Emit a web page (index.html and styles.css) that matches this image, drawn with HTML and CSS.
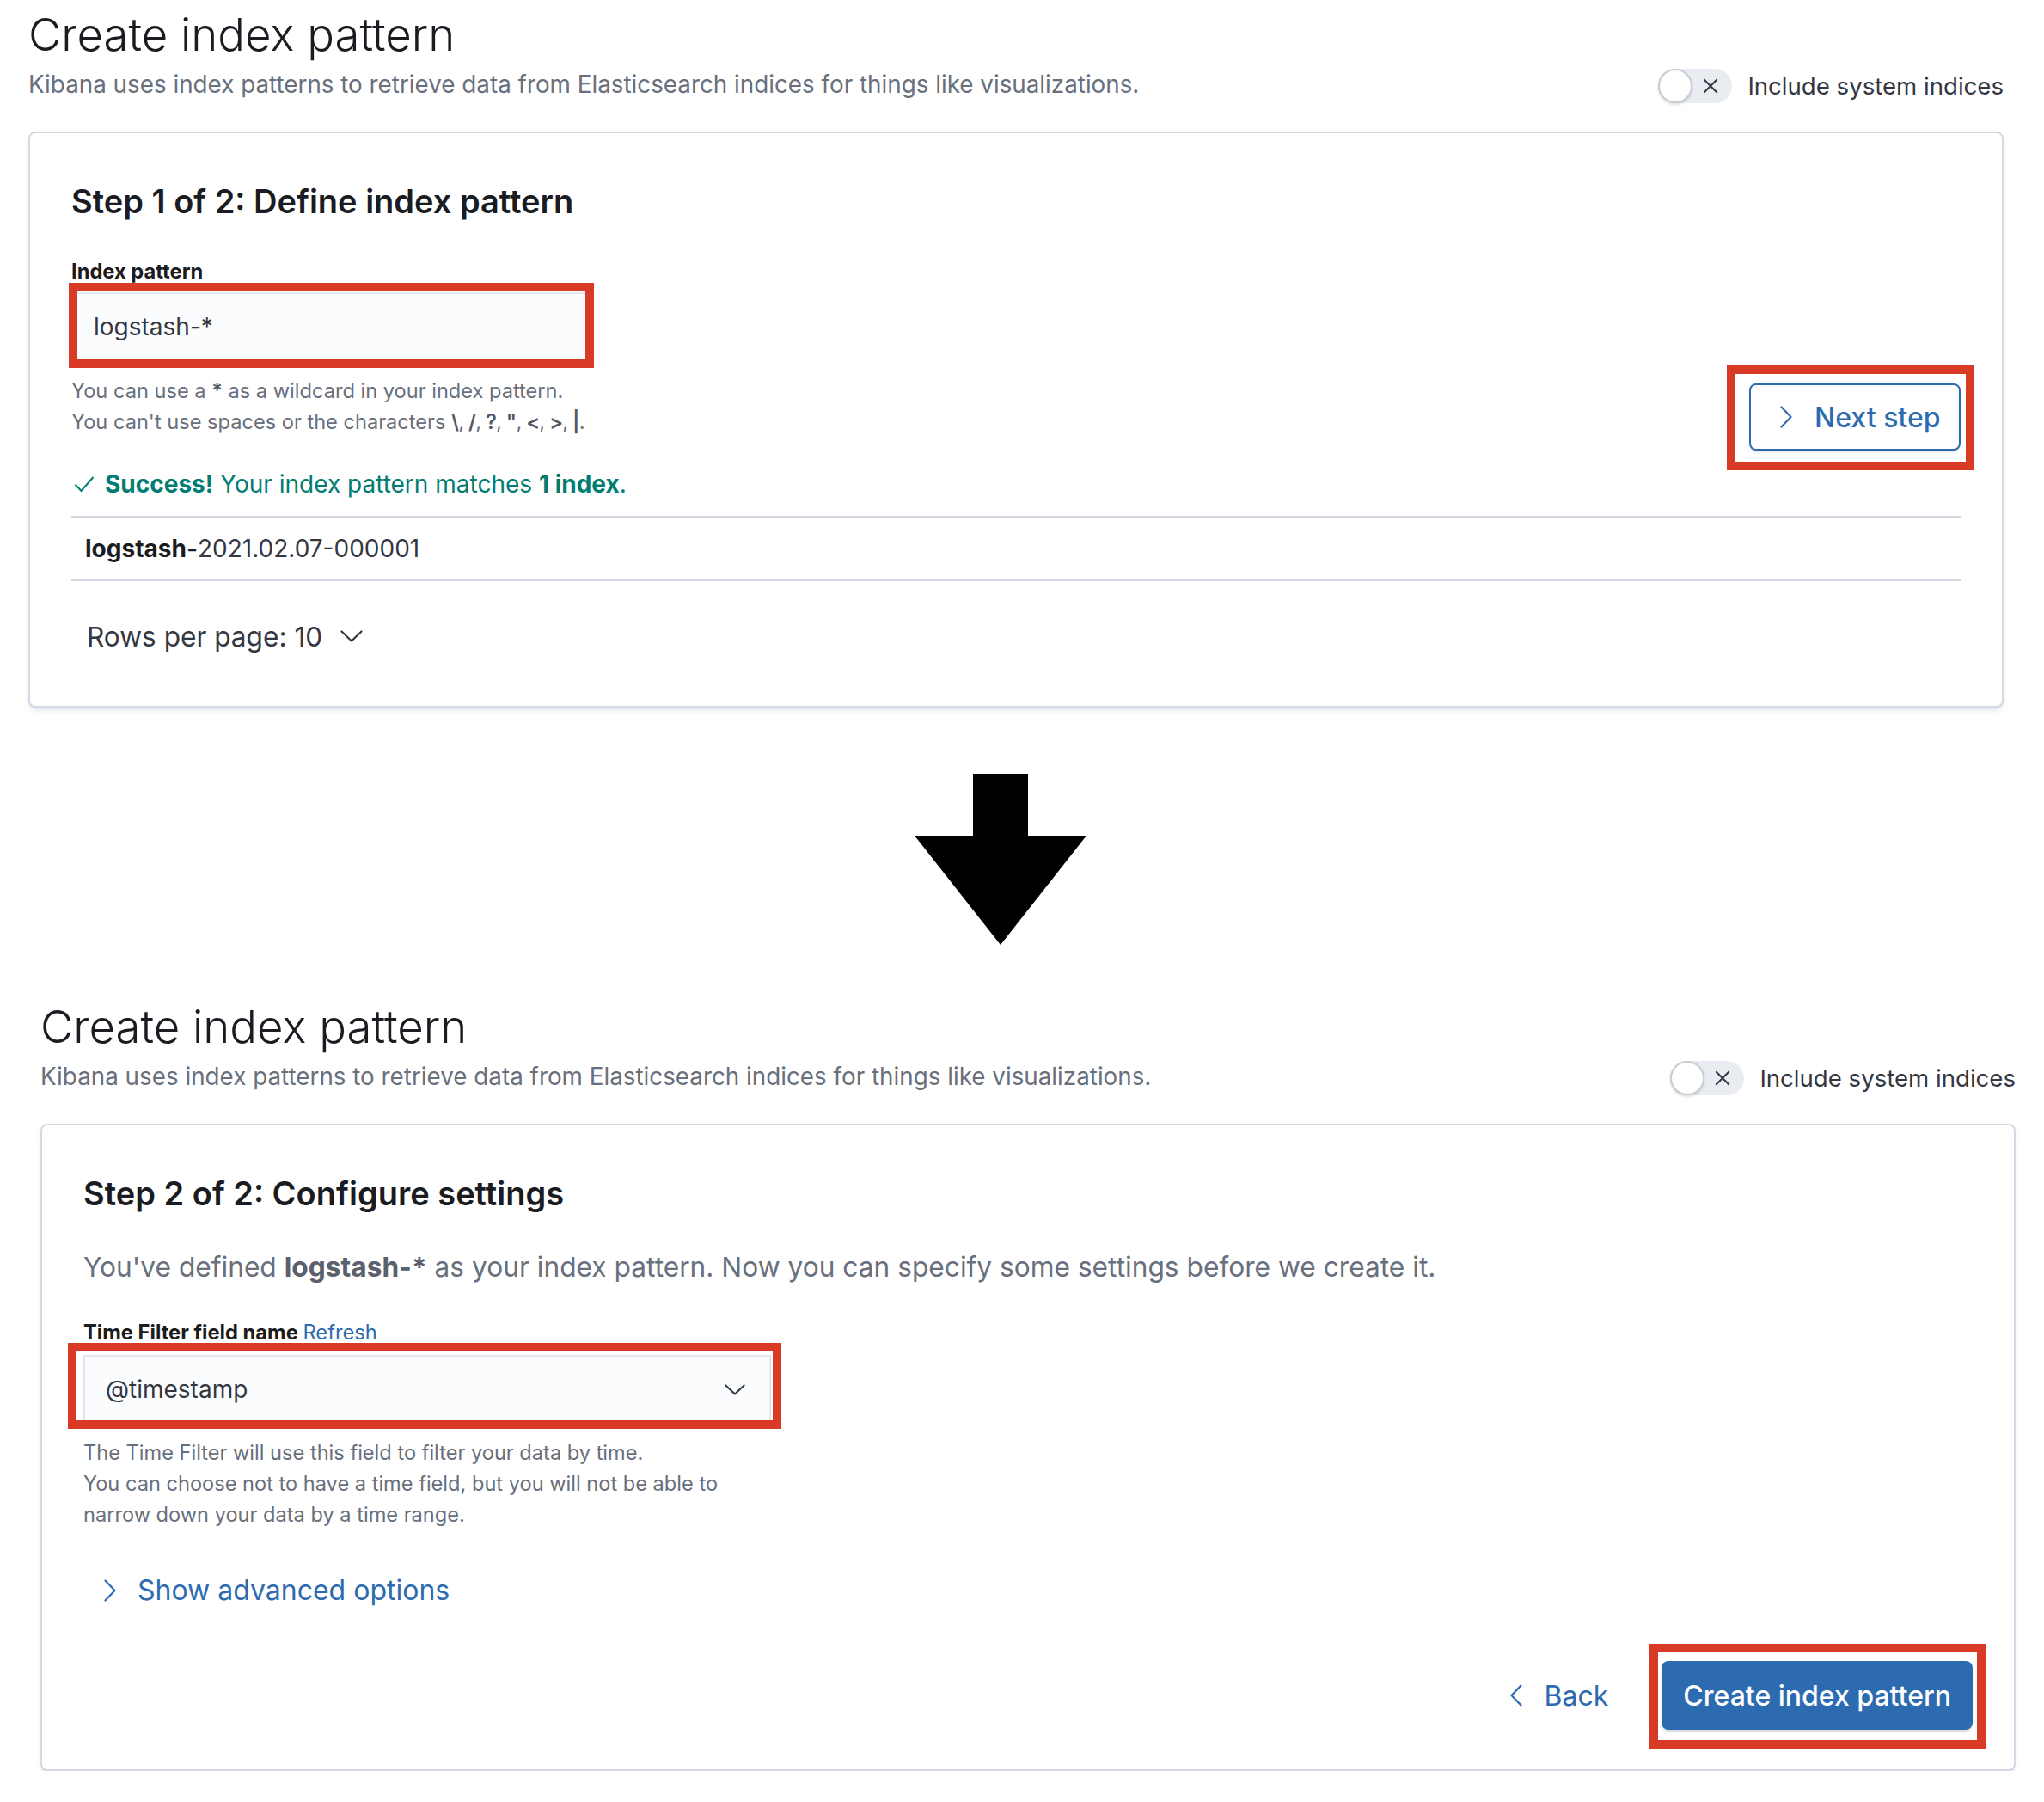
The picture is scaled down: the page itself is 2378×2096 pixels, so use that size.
FILE: index.html
```html
<!DOCTYPE html>
<html lang="en">
<head>
<meta charset="utf-8">
<title>Create index pattern</title>
<link rel="stylesheet" href="styles.css">
</head>
<body>
<section class="page page-step1">
  <header class="page-header">
    <div class="page-heading">
      <h1 class="page-title">Create index pattern</h1>
      <p class="page-subtitle">Kibana uses index patterns to retrieve data from Elasticsearch indices for things like visualizations.</p>
    </div>
    <div class="switch">
      <span class="switch-track">
        <span class="switch-knob"></span>
        <svg class="switch-icon" viewBox="0 0 20 20"><path d="M3 3 L17 17 M17 3 L3 17"/></svg>
      </span>
      <span class="switch-label">Include system indices</span>
    </div>
  </header>

  <div class="panel panel-step1">
    <h2 class="step-title">Step 1 of 2: Define index pattern</h2>
    <div class="define-row">
      <div class="form-col">
        <div class="field-label">Index pattern</div>
        <div class="field-wrap field-wrap-input">
          <div class="field">logstash-*</div>
          <span class="annot annot-input"></span>
        </div>
        <div class="help">
          <div>You can use a <b>*</b> as a wildcard in your index pattern.</div>
          <div>You can't use spaces or the characters <span class="char-list"><b>\</b>, <b>/</b>, <b>?</b>, <b>"</b>, <b>&lt;</b>, <b>&gt;</b>, <b>|</b>.</span></div>
        </div>
        <div class="success">
          <svg class="check-icon" viewBox="0 0 24 20"><polyline points="1.5,10.5 8.5,18 22.5,2"/></svg>
          <span><b>Success!</b> Your index pattern matches <b>1 index</b>.</span>
        </div>
      </div>
      <div class="next-col">
        <button class="btn btn-bordered">
          <svg class="chev chev-right" viewBox="0 0 14 26"><polyline points="1.5,1.5 12.5,13 1.5,24.5"/></svg>
          <span>Next step</span>
        </button>
        <span class="annot annot-next"></span>
      </div>
    </div>
    <div class="index-table">
      <div class="index-row"><b>logstash-</b>2021.02.07-000001</div>
    </div>
    <div class="pagination">
      <span>Rows per page: 10</span>
      <svg class="chev-down" viewBox="0 0 26 14"><polyline points="1.5,1.5 13,12.5 24.5,1.5"/></svg>
    </div>
  </div>
</section>

<svg class="flow-arrow" viewBox="0 0 200 199"><polygon points="68,0 132,0 132,72 200,72 100,199 0,72 68,72"/></svg>

<section class="page page-step2">
  <header class="page-header">
    <div class="page-heading">
      <h1 class="page-title">Create index pattern</h1>
      <p class="page-subtitle">Kibana uses index patterns to retrieve data from Elasticsearch indices for things like visualizations.</p>
    </div>
    <div class="switch">
      <span class="switch-track">
        <span class="switch-knob"></span>
        <svg class="switch-icon" viewBox="0 0 20 20"><path d="M3 3 L17 17 M17 3 L3 17"/></svg>
      </span>
      <span class="switch-label">Include system indices</span>
    </div>
  </header>

  <div class="panel panel-step2">
    <h2 class="step-title">Step 2 of 2: Configure settings</h2>
    <p class="lead">You've defined <b>logstash-*</b> as your index pattern. Now you can specify some settings before we create it.</p>
    <div class="field-label field-label-time">Time Filter field name <span class="link">Refresh</span></div>
    <div class="field-wrap field-wrap-select">
      <div class="field field-select">
        <span>@timestamp</span>
        <svg class="chev-down chev-select" viewBox="0 0 26 14"><polyline points="1.5,1.5 13,12.5 24.5,1.5"/></svg>
      </div>
      <span class="annot annot-select"></span>
    </div>
    <div class="help help-time">
      <div>The Time Filter will use this field to filter your data by time.</div>
      <div>You can choose not to have a time field, but you will not be able to</div>
      <div>narrow down your data by a time range.</div>
    </div>
    <div class="advanced">
      <svg class="chev chev-right" viewBox="0 0 14 26"><polyline points="1.5,1.5 12.5,13 1.5,24.5"/></svg>
      <span>Show advanced options</span>
    </div>
    <div class="footer-row">
      <div class="back-link">
        <svg class="chev chev-left" viewBox="0 0 14 26"><polyline points="12.5,1.5 1.5,13 12.5,24.5"/></svg>
        <span>Back</span>
      </div>
      <div class="create-col">
        <button class="btn btn-fill">Create index pattern</button>
        <span class="annot annot-create"></span>
      </div>
    </div>
  </div>
</section>
</body>
</html>
```

FILE: styles.css
```css
* {
  box-sizing: border-box;
  margin: 0;
  padding: 0;
}

body {
  margin: 0;
  background: #ffffff;
  font-family: Inter, "Noto Sans", "Liberation Sans", sans-serif;
  color: #343741;
  width: 2378px;
}

b {
  font-weight: 700;
}

.page {
  width: 2298px;
}

.page-step1 {
  margin-left: 33px;
}

.page-step2 {
  margin-left: 47px;
  margin-top: 55px;
}

.page-header {
  display: flex;
  justify-content: space-between;
  align-items: flex-end;
  padding-top: 8px;
}

.page-title {
  font-size: 52.7px;
  font-weight: 300;
  line-height: 64px;
  color: #1a1c21;
}

.page-subtitle {
  margin-top: 7px;
  font-size: 27.8px;
  line-height: 38px;
  color: #69707d;
}

.switch {
  display: flex;
  align-items: center;
  gap: 18px;
  margin-bottom: -3px;
}

.switch-track {
  position: relative;
  display: block;
  width: 86px;
  height: 40px;
  border-radius: 20px;
  background: #e9ecf1;
}

.switch-knob {
  position: absolute;
  left: 0;
  top: 0;
  width: 40px;
  height: 40px;
  border-radius: 50%;
  background: #ffffff;
  border: 2px solid #c9ccd2;
  box-shadow: 0 2px 3px rgba(0, 0, 0, 0.12);
}

.switch-icon {
  position: absolute;
  left: 50px;
  top: 9px;
  width: 22px;
  height: 22px;
  stroke: #343741;
  stroke-width: 1.8;
  fill: none;
}

.switch-label {
  font-size: 27.6px;
  line-height: 40px;
  color: #343741;
}

.panel {
  margin-top: 36px;
  border: 2px solid #d3dae6;
  border-radius: 8px;
  background: #ffffff;
  box-shadow: 0 2px 2px -1px rgba(152, 162, 179, 0.3), 0 5px 8px -3px rgba(152, 162, 179, 0.35);
  padding: 48px 48px 49px;
}

.panel-step2 {
  padding-bottom: 46px;
}

.step-title {
  font-size: 38px;
  font-weight: 600;
  line-height: 62px;
  color: #1a1c21;
}

.define-row {
  display: flex;
  justify-content: space-between;
  align-items: flex-start;
  margin-top: 35px;
}

.field-label {
  font-size: 23.7px;
  font-weight: 700;
  line-height: 32px;
  color: #1a1c21;
}

.field-label-time {
  margin-top: 36px;
}

.link {
  color: #2d6bb0;
  font-weight: 400;
}

.field-wrap {
  position: relative;
  margin-top: 10px;
}

.field-wrap-input {
  width: 600px;
  margin-top: 8px;
}

.field-wrap-select {
  width: 800px;
}

.field {
  display: flex;
  align-items: center;
  height: 80px;
  padding: 0 24px;
  background: #fbfcfd;
  border: 2px solid #e3e6ec;
  font-size: 28px;
  color: #343741;
}

.field-select {
  justify-content: space-between;
  padding-right: 28px;
}

.annot {
  position: absolute;
  border: 10px solid #d93a26;
  pointer-events: none;
}

.annot-input {
  top: -11px;
  left: -3px;
  right: -8px;
  bottom: -8px;
}

.annot-select {
  top: -14px;
  left: -18px;
  right: -12px;
  bottom: -6px;
}

.annot-next {
  top: -21px;
  left: -26px;
  right: -16px;
  bottom: -23px;
}

.annot-create {
  top: -20px;
  left: -14px;
  right: -15px;
  bottom: -22px;
}

.help {
  margin-top: 17px;
  font-size: 23.6px;
  line-height: 36px;
  color: #69707d;
}

.help b {
  color: #535966;
  font-weight: 600;
}

.char-list {
  letter-spacing: -0.8px;
}

.help-time {
  margin-top: 16px;
}

.success {
  display: flex;
  align-items: center;
  gap: 12px;
  margin-top: 34px;
  font-size: 28px;
  line-height: 40px;
  color: #017d73;
}

.check-icon {
  width: 24px;
  height: 20px;
  margin-left: 3px;
  fill: none;
  stroke: #017d73;
  stroke-width: 2;
}

.next-col {
  position: relative;
  margin-top: 146px;
}

.btn {
  font-family: inherit;
  font-size: 32px;
  font-weight: 500;
  border-radius: 8px;
  cursor: pointer;
  white-space: nowrap;
}

.btn-bordered {
  display: flex;
  align-items: center;
  justify-content: flex-start;
  gap: 26px;
  width: 246px;
  height: 78px;
  padding: 0 0 0 34px;
  background: #ffffff;
  color: #2d6bb0;
  border: 2px solid #2d6bb0;
  box-shadow: 0 3px 4px -2px rgba(0, 0, 0, 0.18);
}

.btn-fill {
  height: 80px;
  padding: 0 25px;
  background: #2d6bb0;
  color: #ffffff;
  border: none;
  box-shadow: 0 3px 4px -2px rgba(0, 0, 0, 0.25);
}

.chev {
  width: 14px;
  height: 26px;
  fill: none;
  stroke: #2d6bb0;
  stroke-width: 2.2;
  stroke-linecap: round;
  stroke-linejoin: round;
  flex: none;
}

.chev-down {
  width: 26px;
  height: 14px;
  fill: none;
  stroke: #343741;
  stroke-width: 2.2;
  stroke-linecap: round;
  stroke-linejoin: round;
  flex: none;
}

.chev-select {
  width: 24px;
  height: 13px;
}

.index-table {
  margin-top: 17px;
  border-top: 2px solid #d3dae6;
  border-bottom: 2px solid #d3dae6;
}

.index-row {
  padding: 16px 16px;
  font-size: 28px;
  line-height: 40px;
  color: #343741;
}

.index-row b {
  color: #1a1c21;
}

.pagination {
  display: flex;
  align-items: center;
  gap: 21px;
  height: 64px;
  margin-top: 32px;
  padding-left: 18px;
  font-size: 31.6px;
  color: #343741;
}

.flow-arrow {
  display: block;
  width: 200px;
  height: 199px;
  margin: 77px 0 0 1064px;
  fill: #000000;
}

.lead {
  margin-top: 31px;
  font-size: 31.7px;
  line-height: 48px;
  color: #69707d;
}

.lead b {
  color: #5a606c;
}

.advanced {
  display: flex;
  align-items: center;
  gap: 25px;
  margin-top: 46px;
  padding-left: 24px;
  font-size: 32px;
  line-height: 48px;
  color: #2d6bb0;
}

.footer-row {
  display: flex;
  justify-content: flex-end;
  align-items: center;
  margin-top: 58px;
}

.back-link {
  display: flex;
  align-items: center;
  gap: 26px;
  margin-right: 62px;
  font-size: 32px;
  color: #2d6bb0;
}

.create-col {
  position: relative;
}
```
